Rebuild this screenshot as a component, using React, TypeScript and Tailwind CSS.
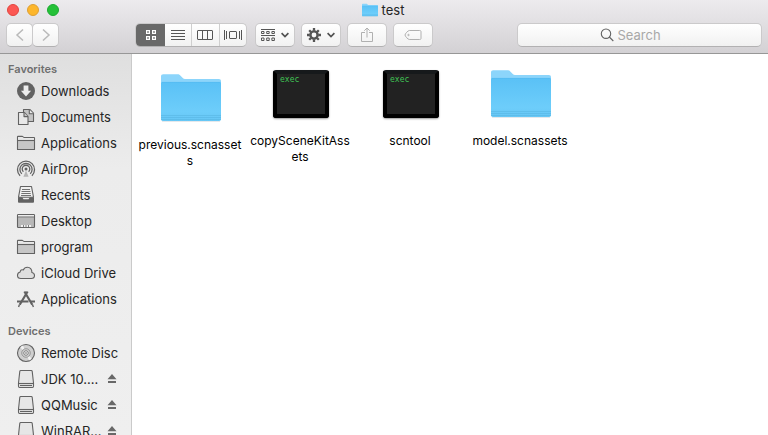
import type { ReactNode } from "react";

const button =
  "flex h-6 items-center justify-center rounded-[5px] border border-[#cbcacb] border-b-[#b2b1b2] bg-linear-to-b from-white to-[#f1f1f1]";

function SideIcon({ children }: { children: ReactNode }) {
  return (
    <svg
      className="size-5 shrink-0 text-[#626262]"
      viewBox="0 0 20 20"
      fill="none"
      stroke="currentColor"
      strokeWidth="1.1"
      strokeLinejoin="round"
      aria-hidden="true"
    >
      {children}
    </svg>
  );
}

const DownloadIcon = () => (
  <SideIcon>
    <circle cx="10" cy="10" r="9" fill="currentColor" stroke="none" />
    <path d="M7.6 4.6h4.8v5.2h2.7L10 15.5 4.9 9.8h2.7z" fill="#ececec" stroke="none" />
  </SideIcon>
);

const DocumentsIcon = () => (
  <SideIcon>
    <path d="M7.5 2.5h6.3l3.7 3.7v8.3h-10z" fill="#c4c4c4" />
    <path d="M13.3 2.5v4.2h4.2" fill="#e8e8e8" />
    <path d="M2.5 5.5h5.8l3.7 3.8v8.2H2.5z" fill="#e8e8e8" />
    <path d="M8 5.5v4.1h4" fill="#c4c4c4" />
  </SideIcon>
);

const FolderIcon = () => (
  <SideIcon>
    <path d="M1.5 16.5V3.9c0-.3.2-.5.5-.5h4.2c.7 0 1 1.1 1.8 1.1h10c.3 0 .5.2.5.5v11.5z" fill="#c6c6c6" />
    <path d="M2 4h4.2L7.7 5H18v2H2z" fill="#e8e8e8" stroke="none" />
    <path d="M1.5 7.5h17" />
  </SideIcon>
);

const AirDropIcon = () => (
  <SideIcon>
    <path d="M4.1 16.7a8.5 8.5 0 1 1 11.8 0M5.8 14.8a6.1 6.1 0 1 1 8.4 0M7.4 12.8a3.8 3.8 0 1 1 5.2 0" strokeWidth="1.3" />
    <circle cx="10" cy="10" r="1.5" fill="currentColor" stroke="none" />
    <path d="M10 11.5 7.4 17.8h5.2z" fill="#b5b5b5" stroke="none" />
  </SideIcon>
);

const RecentsIcon = () => (
  <SideIcon>
    <path d="M4.5 1.5h11l2 10.7h-15z" fill="#f0f0f0" />
    <path d="M6 4.5h8M5.5 6.5h9M5.3 8.5h9.4M5 10.5h10" strokeWidth=".9" />
    <path d="M2 12.2h4.2l1.3 2h5l1.3-2H18v4.6c0 .6-.3.9-.9.9H2.9c-.6 0-.9-.3-.9-.9z" fill="currentColor" stroke="none" />
  </SideIcon>
);

const DesktopIcon = () => (
  <SideIcon>
    <rect x="1.5" y="3.5" width="17" height="13" rx=".8" fill="#b8b8b8" />
    <path d="M2 4h16v1.5H2z" fill="#ececec" stroke="none" />
    <path d="M2 6h16" strokeWidth=".7" />
    <path d="M5 14h10v2H5z" fill="#f2f2f2" stroke="none" />
    <path d="M7.5 14v2M10 14v2M12.5 14v2" strokeWidth=".8" />
  </SideIcon>
);

const CloudIcon = () => (
  <SideIcon>
    <path d="M4.9 15.5h10.4c1.9 0 3.2-1.3 3.2-3 0-1.6-1-2.7-2.6-3 .2-3.4-2-5.3-4.4-5.3-2 0-3.5 1-4.2 2.8-1.6-.7-3 .2-3.1 2-1.7.4-2.7 1.6-2.7 3.2 0 1.9 1.3 3.3 3.4 3.3z" fill="#dedede" />
  </SideIcon>
);

const AppsIcon = () => (
  <SideIcon>
    <path d="M8.4 2.5 16.3 15.8M11.6 2.5 3.7 15.8" strokeWidth="2.2" />
    <path d="m3.4 15.6-.8 2.4M16.4 15.6l1 2.4" strokeWidth="1.4" />
    <path d="M1 12.5h11.5M15 12.5h4" strokeWidth="2.2" />
  </SideIcon>
);

const DiscIcon = () => (
  <SideIcon>
    <circle cx="10" cy="10" r="8.5" fill="#cfcfcf" />
    <path d="M10 10 4.2 4.2A8 8 0 0 1 7 2.5zM10 10l5.8 5.8A8 8 0 0 1 13 17.5z" fill="#f1f1f1" stroke="none" />
    <circle cx="10" cy="10" r="4.2" fill="#dedede" strokeWidth=".6" />
    <circle cx="10" cy="10" r="2.3" fill="#f1f1f1" strokeWidth=".8" />
    <circle cx="10" cy="10" r=".8" fill="currentColor" stroke="none" />
  </SideIcon>
);

const DriveIcon = () => (
  <SideIcon>
    <path d="M4.7 1.5h10.6c.6 0 .8.3.9.8L17.5 14v3.3c0 .8-.4 1.2-1.1 1.2H3.6c-.7 0-1.1-.4-1.1-1.2V14L3.8 2.3c.1-.5.3-.8.9-.8z" fill="#e6e6e6" />
    <path d="M2.6 14.5h14.8" />
    <path d="M4 16.5h12" />
  </SideIcon>
);

const favorites = [
  { name: "Downloads", Icon: DownloadIcon },
  { name: "Documents", Icon: DocumentsIcon },
  { name: "Applications", Icon: FolderIcon },
  { name: "AirDrop", Icon: AirDropIcon },
  { name: "Recents", Icon: RecentsIcon },
  { name: "Desktop", Icon: DesktopIcon },
  { name: "program", Icon: FolderIcon },
  { name: "iCloud Drive", Icon: CloudIcon },
  { name: "Applications", Icon: AppsIcon },
];

const devices = [
  { name: "Remote Disc", Icon: DiscIcon, eject: false },
  { name: "JDK 10....", Icon: DriveIcon, eject: true },
  { name: "QQMusic", Icon: DriveIcon, eject: true },
  { name: "WinRAR...", Icon: DriveIcon, eject: true },
];

function SideRow({ name, Icon, eject }: { name: string; Icon: () => ReactNode; eject?: boolean }) {
  return (
    <li className="flex h-[26px] items-center pr-3 pl-4">
      <a href="#" className="flex grow items-center gap-[5px] whitespace-nowrap">
        <Icon />
        {name}
      </a>
      {eject && (
        <button type="button" aria-label={`Eject ${name}`} className="w-[14px] shrink-0">
          <svg className="mx-auto h-[10px] w-[10px]" viewBox="0 0 10 10" fill="#686868" aria-hidden="true">
            <path d="M5 0 9.5 5.2H.5zM1 7h8v2H1z" />
          </svg>
        </button>
      )}
    </li>
  );
}

function BlueFolder({ className }: { className: string }) {
  return (
    <svg className={className} viewBox="0 0 60 48" aria-hidden="true">
      <defs>
        <linearGradient id="folder-front" x1="0" y1="0" x2="0" y2="1">
          <stop offset="0" stopColor="#5ac1f6" />
          <stop offset=".75" stopColor="#6dcdfa" />
          <stop offset="1" stopColor="#67c7f5" />
        </linearGradient>
      </defs>
      <path d="M1 46.5h58v1H1z" fill="#cbd2d7" />
      <path d="M0 2.5C0 1 .9.3 2.2.3h14.4c1.2 0 1.9.3 2.7 1.2l2.5 2.6c.6.6 1.2.9 2.2.9h33.8c1.5 0 2.2.8 2.2 2.2V14H0z" fill="#8cd5fb" />
      <path d="M0 9.5c0-1 .5-1.5 1.5-1.5h57c1 0 1.5.5 1.5 1.5V45c0 1.2-.7 2-2 2H2c-1.3 0-2-.8-2-2z" fill="url(#folder-front)" />
      <path d="M0 41.5h60M0 43.5h60M0 45.5h60" stroke="#58b5e3" strokeWidth=".6" />
      <path d="M1 8.3h58" stroke="#4db3ea" strokeWidth=".4" />
    </svg>
  );
}

function ExecIcon() {
  return (
    <span className="block h-12 w-14 rounded-[3px] border-4 border-black border-t-[#16191b] bg-[#222] pl-[3px] text-left font-['DejaVu_Sans_Mono',monospace] text-[8px] leading-3 text-[#3fc455] shadow-[0_1px_2px_#0006]">
      exec
    </span>
  );
}

const files = [
  { name: "previous.scnassets", kind: "folder", place: "pt-5" },
  { name: "copySceneKitAssets", kind: "exec", place: "pt-4" },
  { name: "scntool", kind: "exec", place: "pt-4" },
  { name: "model.scnassets", kind: "folder", place: "pt-4" },
];

function Chevron() {
  return (
    <svg className="h-2 w-2" viewBox="0 0 8 8" fill="none" stroke="#505050" strokeWidth="1.7" aria-hidden="true">
      <path d="m.6 2.2 3.4 3.3 3.4-3.3" />
    </svg>
  );
}

export default function App() {
  return (
    <div className="flex h-screen flex-col overflow-hidden bg-white font-[Inter,'Noto_Sans',sans-serif] text-[13px] leading-4 text-[#252525]">
      <header className="h-[54px] shrink-0 border-b border-[#979797] bg-linear-to-b from-[#edebee] to-[#d3d1d4]">
        <div className="grid h-[23px] grid-cols-[1fr_auto_1fr] items-start">
          <div className="flex gap-2 pt-1 pl-[7px]">
            <button type="button" aria-label="Close" className="size-3 rounded-full border border-[#e2453f] bg-[#fc5753]" />
            <button type="button" aria-label="Minimize" className="size-3 rounded-full border border-[#de9f34] bg-[#fdb62b]" />
            <button type="button" aria-label="Zoom" className="size-3 rounded-full border border-[#1cab31] bg-[#25c138]" />
          </div>
          <h1 className="flex items-center gap-1 pt-[2px] pr-0.5">
            <BlueFolder className="h-[14px] w-4" />
            test
          </h1>
        </div>
        <div className="flex items-center px-1.5">
          <button type="button" aria-label="Back" className={`${button} w-[27px]`}>
            <svg className="h-3.5 w-2.5" viewBox="0 0 10 14" fill="none" stroke="#b9b9b9" strokeWidth="1.5" aria-hidden="true">
              <path d="M8 1.5 2 7l6 5.5" />
            </svg>
          </button>
          <button type="button" aria-label="Forward" className={`${button} -ml-px w-[27px]`}>
            <svg className="h-3.5 w-2.5" viewBox="0 0 10 14" fill="none" stroke="#b9b9b9" strokeWidth="1.5" aria-hidden="true">
              <path d="m2 1.5 6 5.5-6 5.5" />
            </svg>
          </button>
          <div className="ml-[76px] flex h-6 w-28 overflow-hidden rounded-[5px] border border-[#cbcacb] border-b-[#b2b1b2] bg-linear-to-b from-white to-[#f1f1f1]">
            <button type="button" aria-label="Icon view" className="flex w-[29px] items-center justify-center bg-[#696969]">
              <svg className="size-3" viewBox="0 0 12 12" fill="none" stroke="#fff" strokeWidth="1.2" aria-hidden="true">
                <path d="M1.6 1.6h2.8v2.8H1.6zM7.6 1.6h2.8v2.8H7.6zM1.6 7.6h2.8v2.8H1.6zM7.6 7.6h2.8v2.8H7.6z" />
              </svg>
            </button>
            <button type="button" aria-label="List view" className="flex flex-1 items-center justify-center">
              <svg className="h-3 w-3.5" viewBox="0 0 14 12" stroke="#555" aria-hidden="true">
                <path d="M0 1.5h14M0 4.5h14M0 7.5h14M0 10.5h14" />
              </svg>
            </button>
            <button type="button" aria-label="Column view" className="flex flex-1 items-center justify-center border-l border-[#cfcfcf]">
              <svg className="h-3 w-4" viewBox="0 0 16 12" fill="none" stroke="#555" aria-hidden="true">
                <rect x=".5" y="1.5" width="15" height="9" rx=".5" />
                <path d="M5.5 1.5v9M10.5 1.5v9" />
              </svg>
            </button>
            <button type="button" aria-label="Cover flow view" className="flex flex-1 items-center justify-center border-l border-[#cfcfcf]">
              <svg className="h-3 w-[18px]" viewBox="0 0 18 12" fill="none" stroke="#555" aria-hidden="true">
                <rect x="5.5" y="2.5" width="7" height="7" rx=".5" />
                <path d="M.5 1v10M2.5 2v8M15.5 2v8M17.5 1v10" />
              </svg>
            </button>
          </div>
          <div className="ml-2 flex gap-1.5">
            <button type="button" aria-label="Group items" className={`${button} w-10 gap-1.5`}>
              <svg className="h-3.5 w-3.5" viewBox="0 0 14 14" fill="none" stroke="#555" aria-hidden="true">
                <path d="M0 1.5h14M0 7.5h14" />
                <path d="M.5 3.5H3v2H.5zM5.7 3.5h2.5v2H5.7zM10.9 3.5h2.5v2h-2.5zM.5 10H3v2.5H.5zM5.7 10h2.5v2.5H5.7zM10.9 10h2.5v2.5h-2.5z" />
              </svg>
              <Chevron />
            </button>
            <button type="button" aria-label="Actions" className={`${button} w-10 gap-1.5`}>
              <svg className="size-3.5" viewBox="-7 -7 14 14" fill="none" stroke="#555" aria-hidden="true">
                <circle r="3.6" strokeWidth="2.4" />
                <path
                  d="M0-4.2V-7M0 4.2V7M-4.2 0H-7M4.2 0H7M3-3 4.8-4.8M-3-3-4.8-4.8M3 3 4.8 4.8M-3 3-4.8 4.8"
                  strokeWidth="2.3"
                />
              </svg>
              <Chevron />
            </button>
            <button type="button" aria-label="Share" className={`${button} w-10`}>
              <svg className="h-4 w-3" viewBox="0 0 12 16" fill="none" stroke="#b0b0b0" aria-hidden="true">
                <path d="M4 5.5H.5v9h11v-9H8M6 10.5V1M3.3 3.7 6 1l2.7 2.7" />
              </svg>
            </button>
            <button type="button" aria-label="Tags" className={`${button} w-10`}>
              <svg className="h-3 w-[18px]" viewBox="0 0 18 12" fill="none" stroke="#b0b0b0" aria-hidden="true">
                <path d="M5.3 1.5h10.4c1 0 1.3.4 1.3 1.3v6.4c0 .9-.3 1.3-1.3 1.3H5.3C4 10.5 1 7.2 1 6s3-4.5 4.3-4.5z" />
                <circle cx="4.5" cy="6" r=".7" />
              </svg>
            </button>
          </div>
          <label className={`${button} ml-auto w-[245px] gap-1 pr-1.5`}>
            <svg className="size-[14px]" viewBox="0 0 14 14" fill="none" stroke="#626262" strokeWidth="1.1" aria-hidden="true">
              <circle cx="6" cy="5.7" r="4.7" />
              <path d="m9.3 9 4 4" />
            </svg>
            <input
              type="text"
              aria-label="Search"
              placeholder="Search"
              className="w-14 bg-transparent outline-none placeholder:text-[#a8a8a8]"
            />
          </label>
        </div>
      </header>
      <div className="flex min-h-0 grow">
        <nav className="w-[132px] shrink-0 overflow-hidden border-r border-[#cacaca] bg-linear-to-b from-[#dfdfdf] via-[#ececec] via-30% to-[#efefef] pt-1.5">
          <h2 className="pl-2 text-[11px] leading-[18px] font-semibold text-[#6e6e6e]">Favorites</h2>
          <ul>
            {favorites.map((item, i) => (
              <SideRow key={i} {...item} />
            ))}
          </ul>
          <h2 className="mt-[10px] pl-2 text-[11px] leading-[18px] font-semibold text-[#6e6e6e]">Devices</h2>
          <ul>
            {devices.map((item) => (
              <SideRow key={item.name} {...item} />
            ))}
          </ul>
        </nav>
        <main className="grow overflow-hidden pl-1">
          <ul className="flex flex-wrap text-xs leading-4 text-black">
            {files.map((file) => (
              <li key={file.name} className={`flex w-[110px] flex-col items-center ${file.place}`}>
                <span className="flex h-[55px] items-start">
                  {file.kind === "folder" ? <BlueFolder className="h-12 w-[60px]" /> : <ExecIcon />}
                </span>
                <span className="mt-2 w-[106px] pr-0.5 text-center break-all">{file.name}</span>
              </li>
            ))}
          </ul>
        </main>
      </div>
    </div>
  );
}
